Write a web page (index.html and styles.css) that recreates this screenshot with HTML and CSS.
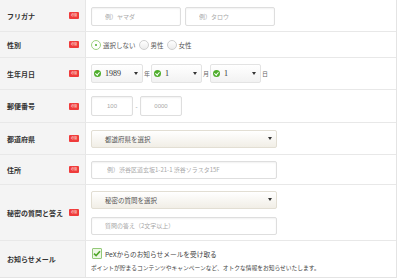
FILE: index.html
```html
<!DOCTYPE html>
<html lang="ja">
<head>
    <meta charset="UTF-8">
    <title>会員情報の登録</title>
    <link rel="stylesheet" href="styles.css">
</head>
<body>
    <div class="form">
        <div class="row row-kana">
            <div class="label"><span>フリガナ</span><span class="req">必須</span></div>
            <div class="field">
                <input class="text half" placeholder="例）ヤマダ">
                <input class="text half" placeholder="例）タロウ">
            </div>
        </div>
        <div class="row row-sex">
            <div class="label"><span>性別</span><span class="req">必須</span></div>
            <div class="field radios">
                <label class="radio on"><span class="dot"></span>選択しない</label>
                <label class="radio"><span class="dot"></span>男性</label>
                <label class="radio"><span class="dot"></span>女性</label>
            </div>
        </div>
        <div class="row row-birth">
            <div class="label"><span>生年月日</span><span class="req">必須</span></div>
            <div class="field">
                <div class="select num year"><span class="ok"></span><span class="val">1989</span><span class="caret"></span></div>
                <span class="unit">年</span>
                <div class="select num day"><span class="ok"></span><span class="val">1</span><span class="caret"></span></div>
                <span class="unit">月</span>
                <div class="select num day"><span class="ok"></span><span class="val">1</span><span class="caret"></span></div>
                <span class="unit">日</span>
            </div>
        </div>
        <div class="row row-zip">
            <div class="label"><span>郵便番号</span><span class="req">必須</span></div>
            <div class="field">
                <input class="text zip" placeholder="100">
                <span class="dash">-</span>
                <input class="text zip" placeholder="0000">
            </div>
        </div>
        <div class="row row-pref">
            <div class="label"><span>都道府県</span><span class="req">必須</span></div>
            <div class="field">
                <div class="select wide"><span class="val">都道府県を選択</span><span class="caret"></span></div>
            </div>
        </div>
        <div class="row row-addr">
            <div class="label"><span>住所</span><span class="req">必須</span></div>
            <div class="field">
                <input class="text wide" placeholder="例）渋谷区道玄坂1-21-1 渋谷ソラスタ15F">
            </div>
        </div>
        <div class="row row-secret">
            <div class="label"><span>秘密の質問と答え</span><span class="req">必須</span></div>
            <div class="field stack">
                <div class="select wide"><span class="val">秘密の質問を選択</span><span class="caret"></span></div>
                <input class="text wide" placeholder="質問の答え（2文字以上）">
            </div>
        </div>
        <div class="row row-mail">
            <div class="label"><span>お知らせメール</span></div>
            <div class="field stack">
                <label class="check"><span class="box"><svg width="8" height="7" viewBox="0 0 8 7"><path d="M1 3.6 L3.1 5.6 L7 1.2" fill="none" stroke="#4fa62a" stroke-width="1.6"/></svg></span>PeXからのお知らせメールを受け取る</label>
                <p class="note">ポイントが貯まるコンテンツやキャンペーンなど、オトクな情報をお知らせいたします。</p>
            </div>
        </div>
    </div>
</body>
</html>
```

FILE: styles.css
```css
body {
    margin: 0;
    background: #ffffff;
    font-family: "Noto Sans CJK JP", "Noto Sans", sans-serif;
    color: #444444;
}
.form {
    width: 396px;
    border-right: 1px solid #e4e4e4;
    border-bottom: 1px solid #e4e4e4;
}
.row {
    display: flex;
    border-top: 1px solid #e8e8e8;
    box-sizing: border-box;
}
.row-kana { height: 31px; border-top: none; }
.row-sex { height: 26px; }
.row-birth { height: 32px; }
.row-zip { height: 33px; }
.row-pref { height: 32px; }
.row-addr { height: 30px; }
.row-secret { height: 56px; }
.row-mail { height: 37px; }
.label {
    width: 72px;
    flex: none;
    padding: 0 6px 0 7px;
    background: #f4f4f4;
    border-right: 1px solid #e6e6e6;
    display: flex;
    align-items: center;
    justify-content: space-between;
    font-size: 7px;
    font-weight: 700;
    color: #333333;
}
.req {
    width: 10px;
    height: 7px;
    background: #ef3b3b;
    color: #ffffff;
    font-size: 3px;
    font-weight: 400;
    line-height: 7px;
    text-align: center;
    border-radius: 1px;
}
.field {
    flex: 1;
    display: flex;
    align-items: center;
    padding-left: 5px;
    font-size: 6.5px;
}
.stack {
    flex-direction: column;
    align-items: flex-start;
    justify-content: center;
    gap: 8px;
}
.text {
    box-sizing: border-box;
    height: 19px;
    border: 1px solid #dedede;
    border-radius: 2px;
    box-shadow: inset 0 1px 2px rgba(0, 0, 0, 0.06);
    padding: 0 0 0 13px;
    margin: 0;
    font-family: inherit;
    font-size: 6px;
    color: #555555;
    background: #ffffff;
    outline: none;
}
.text::placeholder { color: #a8a8a8; }
.half { width: 90px; margin-right: 4px; }
.row-kana .field { padding-top: 2px; }
.zip {
    width: 42px;
    height: 20px;
    padding: 0;
    text-align: center;
    font-family: "Liberation Sans", sans-serif;
}
.dash {
    width: 7px;
    text-align: center;
    color: #888888;
    font-size: 6px;
}
.wide { width: 186px; }
.row-addr .text { height: 18px; padding-left: 15px; }
.row-secret .text { height: 18px; padding-left: 13px; }
.select {
    box-sizing: border-box;
    height: 18px;
    border: 1px solid #e2ded3;
    border-radius: 2px;
    background: linear-gradient(#ffffff, #f1eee6);
    display: flex;
    align-items: center;
    padding: 0 4px 0 13px;
    font-size: 6.5px;
    color: #555555;
}
.select .val { flex: 1; }
.caret {
    width: 0;
    height: 0;
    border-left: 2px solid transparent;
    border-right: 2px solid transparent;
    border-top: 3px solid #333333;
}
.num {
    height: 19px;
    padding-left: 2px;
    border-color: #e3e3e3;
    background: linear-gradient(#ffffff, #f2f2f2);
    font-family: "Liberation Serif", serif;
    font-size: 8px;
    color: #333333;
}
.year { width: 52px; }
.day { width: 51px; }
.ok {
    width: 7px;
    height: 7px;
    border-radius: 50%;
    background: #4fae2c;
    margin-right: 4px;
    position: relative;
}
.ok::after {
    content: "";
    position: absolute;
    left: 2px;
    top: 1px;
    width: 1.5px;
    height: 3px;
    border: solid #ffffff;
    border-width: 0 1px 1px 0;
    transform: rotate(40deg);
}
.unit {
    width: 8px;
    text-align: center;
    font-size: 6px;
    color: #666666;
}
.radios { gap: 3px; }
.radio {
    display: flex;
    align-items: center;
    font-size: 6.5px;
    color: #555555;
}
.dot {
    box-sizing: border-box;
    width: 10px;
    height: 10px;
    border-radius: 50%;
    border: 1px solid #cfcfcf;
    background: linear-gradient(#ffffff, #ececec);
    margin-right: 2px;
    position: relative;
}
.radio.on .dot {
    border-color: #9fd283;
    background: #ffffff;
}
.radio.on .dot::after {
    content: "";
    position: absolute;
    left: 3px;
    top: 3px;
    width: 2px;
    height: 2px;
    border-radius: 50%;
    background: #4fae2c;
}
.row-mail .stack { gap: 4px; padding-top: 2px; }
.check {
    display: flex;
    align-items: center;
    font-size: 6.7px;
    color: #444444;
    padding-left: 1px;
}
.box {
    box-sizing: border-box;
    width: 10px;
    height: 11px;
    border: 1px solid #93c978;
    border-radius: 1px;
    background: #eef8e6;
    display: flex;
    align-items: center;
    justify-content: center;
    margin-right: 3px;
}
.note {
    margin: 0;
    font-size: 5.75px;
    color: #444444;
}
```
